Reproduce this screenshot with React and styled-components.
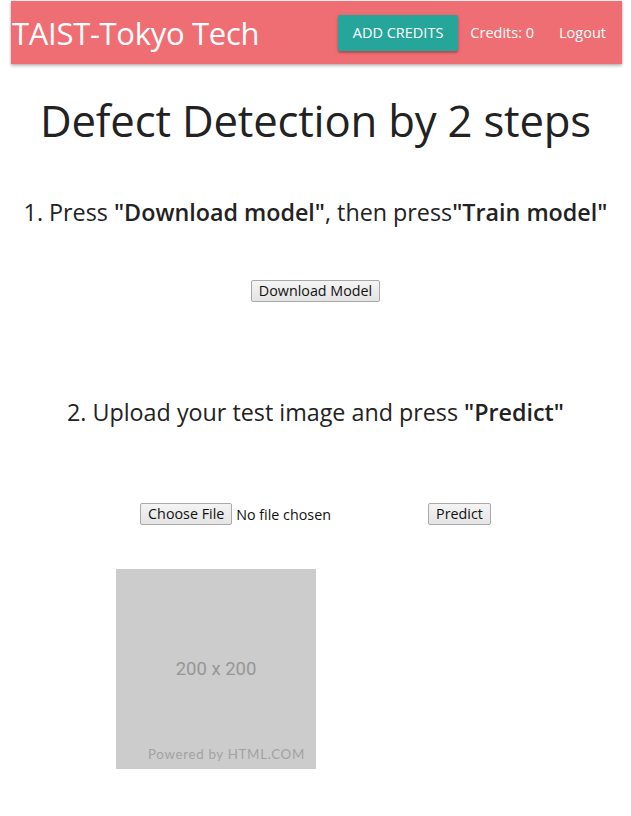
import React from 'react';
import styled, { createGlobalStyle } from 'styled-components';

const GlobalStyle = createGlobalStyle`
  body {
    margin: 0;
    background: #fff;
    font-family: 'Open Sans', 'Noto Sans', sans-serif;
    color: #222;
  }
`;

const Page = styled.div`
  width: 631px;
  padding-top: 1px;
`;

const Nav = styled.nav`
  margin: 0 9px 0 11px;
  height: 63px;
  background: #ef6e73;
  box-shadow: 0 2px 3px rgba(0, 0, 0, 0.25), 0 0 2px rgba(0, 0, 0, 0.15);
  display: flex;
  align-items: center;
  color: #fff;
`;

const Brand = styled.div`
  font-size: 31px;
  letter-spacing: -0.3px;
  margin-left: 1px;
  flex: 1;
`;

const AddButton = styled.button`
  height: 36px;
  padding: 0 15px;
  border: none;
  border-radius: 2px;
  background: #26a69a;
  color: #fff;
  font-family: inherit;
  font-size: 14.5px;
  box-shadow: 0 2px 2px rgba(0, 0, 0, 0.2), 0 1px 4px rgba(0, 0, 0, 0.15);
  margin-right: 12px;
`;

const NavLink = styled.span`
  font-size: 14.5px;
  margin-left: ${p => p.gap || 0}px;
  margin-right: ${p => p.end || 0}px;
`;

const Title = styled.h1`
  margin: 32px 0 0;
  text-align: center;
  font-weight: 400;
  font-size: 43.7px;
  line-height: 48px;
  letter-spacing: -0.2px;
`;

const Step = styled.h2`
  margin: ${p => p.top}px 0 0;
  text-align: center;
  font-weight: 400;
  font-size: 23.3px;
  line-height: 32px;
  b {
    font-weight: 600;
  }
`;

const Row = styled.div`
  display: flex;
  justify-content: center;
  align-items: center;
  margin-top: ${p => p.top}px;
`;

const NativeButton = styled.button`
  height: 22px;
  padding: 0 7px;
  background: linear-gradient(#f4f4f4, #e4e4e4);
  border: 1px solid #a9a9a9;
  border-radius: 2px;
  font-family: 'Open Sans', 'Noto Sans', sans-serif;
  font-size: 14.3px;
  color: #111;
  line-height: 1;
`;

const FileInput = styled.div`
  width: 288px;
  display: flex;
  align-items: center;
  gap: 4px;
  font-size: 14.3px;
  color: #111;
`;

const Placeholder = styled.div`
  margin: 44px 0 0 116px;
  width: 200px;
  height: 200px;
  background: #cccccc;
  display: flex;
  flex-direction: column;
  align-items: center;
  justify-content: flex-end;
  font-family: 'Roboto', 'Liberation Sans', sans-serif;
`;

const Size = styled.div`
  color: #969696;
  font-size: 18.5px;
  margin-bottom: 66px;
`;

const Powered = styled.div`
  color: #a2a2a2;
  font-family: 'Lato', 'Open Sans', sans-serif;
  font-size: 13.3px;
  letter-spacing: 0.7px;
  margin-bottom: 7px;
  align-self: flex-end;
  margin-right: 11px;
`;

export default function App() {
  return (
    <Page>
      <GlobalStyle />
      <Nav>
        <Brand>TAIST-Tokyo Tech</Brand>
        <AddButton>ADD CREDITS</AddButton>
        <NavLink>Credits: 0</NavLink>
        <NavLink gap={25} end={16}>Logout</NavLink>
      </Nav>

      <Title>Defect Detection by 2 steps</Title>

      <Step top={52}>
        1. Press <b>"Download model"</b>, then press<b>"Train model"</b>
      </Step>

      <Row top={52}>
        <NativeButton>Download Model</NativeButton>
      </Row>

      <Step top={94}>
        2. Upload your test image and press <b>"Predict"</b>
      </Step>

      <Row top={75}>
        <FileInput>
          <NativeButton>Choose File</NativeButton>
          <span>No file chosen</span>
        </FileInput>
        <NativeButton>Predict</NativeButton>
      </Row>

      <Placeholder>
        <Size>200 x 200</Size>
        <Powered>Powered by HTML.COM</Powered>
      </Placeholder>
    </Page>
  );
}
